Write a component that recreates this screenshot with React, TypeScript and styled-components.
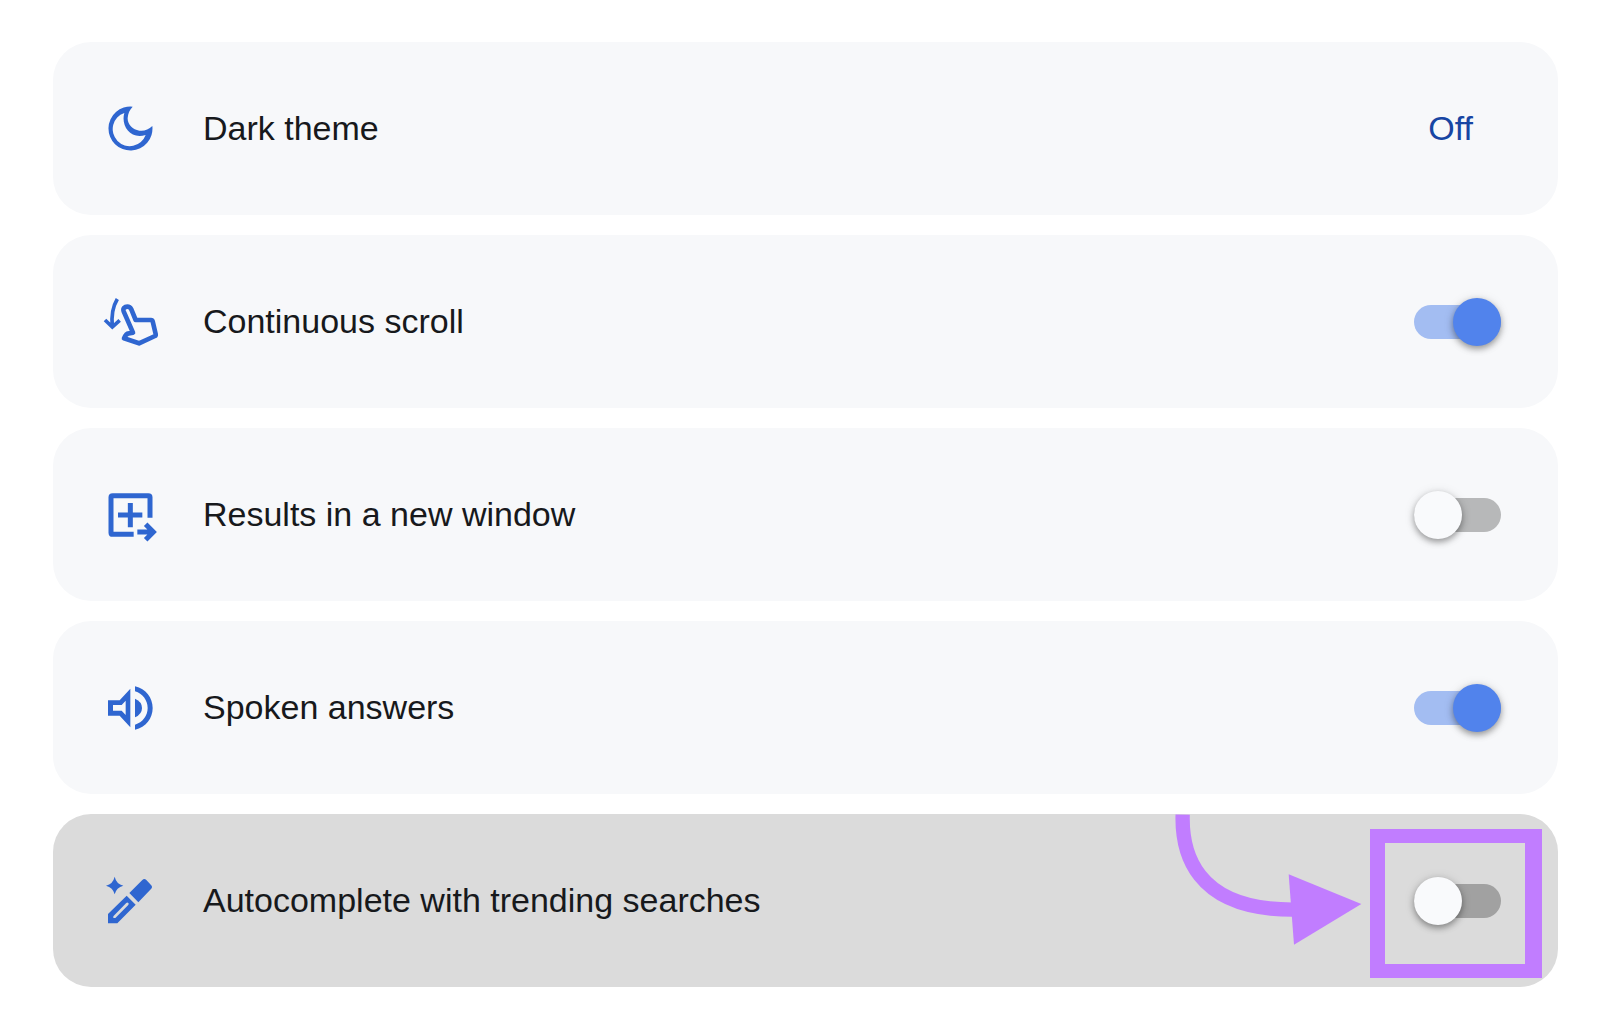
import React, { useId, useState } from "react";
import styled, { createGlobalStyle } from "styled-components";

const GlobalStyle = createGlobalStyle`
  *, *::before, *::after { box-sizing: border-box; }
  body {
    margin: 0;
    background: #ffffff;
    color: #17191c;
    font-family: "Liberation Sans", Arial, sans-serif;
    font-size: 34px;
    line-height: 38px;
  }
`;

const SettingsList = styled.main`
  display: flex;
  flex-direction: column;
  gap: 20px;
  padding: 42px 42px 42px 53px;
`;

const Row = styled.section<{ $highlighted?: boolean }>`
  position: relative;
  display: flex;
  align-items: center;
  gap: 44px;
  min-height: 173px;
  padding: 24px 57px 24px 48px;
  border-radius: 38px;
  background: ${(p) => (p.$highlighted ? "#dbdbdb" : "#f7f8fa")};
`;

const Icon = styled.svg`
  flex: none;
  width: 58px;
  height: 58px;
  color: #2f66d0;
  fill: currentColor;
`;

const Label = styled.label`
  flex: 1;
  padding-bottom: 1px;
`;

const Title = styled.span`
  flex: 1;
  padding-bottom: 1px;
`;

const ValueButton = styled.button`
  padding: 0 28px 1px;
  border: 0;
  background: none;
  color: #1745a3;
  font: inherit;
  cursor: pointer;
`;

const Switch = styled.input<{ $dark?: boolean }>`
  appearance: none;
  flex: none;
  display: flex;
  align-items: center;
  width: 87px;
  height: 34px;
  margin: 0;
  border-radius: 17px;
  background: ${(p) => (p.$dark ? "#a1a1a1" : "#b7b8b9")};
  cursor: pointer;

  &::before {
    content: "";
    flex: none;
    width: 48px;
    height: 48px;
    border-radius: 50%;
    background: #f9fafc;
    box-shadow: 0 3px 6px rgba(0, 0, 0, 0.35), 0 1px 12px rgba(0, 0, 0, 0.1);
  }

  &:checked {
    justify-content: flex-end;
    background: #a3bdf2;
  }

  &:checked::before {
    background: #5183ec;
  }
`;

const Callout = styled.div`
  position: absolute;
  top: 15px;
  right: 16px;
  width: 172px;
  height: 149px;
  border: solid #c17dff;
  border-width: 14px 17px 14px 15px;
  pointer-events: none;
`;

const CalloutArrow = styled.svg`
  position: absolute;
  top: 0;
  right: 195px;
  width: 190px;
  height: 132px;
  color: #c17dff;
  pointer-events: none;
`;

const MoonIcon = () => (
  <Icon viewBox="33 28 174 174" aria-hidden="true">
    <path
      fillRule="evenodd"
      d="M128 48A66 66 0 1 0 187 106C176 117 162 122 148 120C128 117 112 101 113 82C114 68 119 57 128 48ZM103 67C92 104 120 148 167 133A51 51 0 1 1 103 67Z"
    />
  </Icon>
);

const ScrollIcon = () => (
  <Icon viewBox="33 37 174 174" overflow="visible" aria-hidden="true">
    <g fill="none" stroke="currentColor">
      <path strokeWidth="11" d="M82 55Q62 88 67 138M45 118L67 139L89 119" />
      <path
        strokeWidth="14"
        strokeLinejoin="round"
        d="M101 92L129 156L116 158Q108 159 102 173L147 188L195 166Q198 164 197 160L188 122Q187 118 183 118H137L124 86C121 80 117 78 112 78C104 78 98 83 101 92Z"
      />
    </g>
  </Icon>
);

const NewWindowIcon = () => (
  <Icon viewBox="33 31 174 174" aria-hidden="true">
    <g fill="none" stroke="currentColor" strokeWidth="15">
      <path d="M180 126V65Q180 60 175 60H68Q63 60 63 65V171Q63 176 68 176H131" />
      <path d="M121 82V155M84 118H157" />
      <path d="M142 169H191M167 146L190 169L167 192" />
    </g>
  </Icon>
);

const SpeakerIcon = () => (
  <Icon viewBox="33 26 174 174" aria-hidden="true">
    <path
      fillRule="evenodd"
      d="M54 90H89L121 55V171L89 136H54ZM69 104V121H95L107 134V91L95 104Z"
    />
    <path d="M135 85Q156 94 156 113Q156 132 135 141Z" />
    <path d="M135 48C168 55 188 83 188 113C188 143 168 171 135 178V163C158 156 173 136 173 113C173 90 158 70 135 63Z" />
  </Icon>
);

const PenIcon = () => (
  <Icon viewBox="33 34 174 174" aria-hidden="true">
    <path d="M74 48Q79 70 100 75Q79 80 74 101Q69 80 48 75Q69 70 74 48Z" />
    <path d="M118 97L157 58Q163 52 169 58L183 73Q189 79 183 85L145 125Z" />
    <path
      fillRule="evenodd"
      d="M110 105L137 132L82 188H54V160ZM70 167V172H76L114 134Q118 130 115 127Q112 124 108 128Z"
    />
  </Icon>
);

interface ToggleRowProps {
  icon: React.ReactNode;
  label: string;
  initial: boolean;
  highlighted?: boolean;
}

function ToggleRow({ icon, label, initial, highlighted }: ToggleRowProps) {
  const id = useId();
  const [on, setOn] = useState(initial);
  return (
    <Row $highlighted={highlighted}>
      {icon}
      <Label htmlFor={id}>{label}</Label>
      <Switch
        id={id}
        type="checkbox"
        $dark={highlighted}
        checked={on}
        onChange={(e) => setOn(e.target.checked)}
      />
      {highlighted && (
        <>
          <CalloutArrow viewBox="70 42 570 396" aria-hidden="true">
            <path
              d="M99 44C96 150 130 329 428 329"
              fill="none"
              stroke="currentColor"
              strokeWidth="43"
            />
            <path d="M417 223L635 312L433 434Z" fill="currentColor" />
          </CalloutArrow>
          <Callout />
        </>
      )}
    </Row>
  );
}

export default function App() {
  const [dark, setDark] = useState(false);
  return (
    <>
      <GlobalStyle />
      <SettingsList>
        <Row>
          <MoonIcon />
          <Title id="dark-theme">Dark theme</Title>
          <ValueButton
            type="button"
            aria-describedby="dark-theme"
            onClick={() => setDark(!dark)}
          >
            {dark ? "On" : "Off"}
          </ValueButton>
        </Row>
        <ToggleRow icon={<ScrollIcon />} label="Continuous scroll" initial />
        <ToggleRow
          icon={<NewWindowIcon />}
          label="Results in a new window"
          initial={false}
        />
        <ToggleRow icon={<SpeakerIcon />} label="Spoken answers" initial />
        <ToggleRow
          icon={<PenIcon />}
          label="Autocomplete with trending searches"
          initial={false}
          highlighted
        />
      </SettingsList>
    </>
  );
}
